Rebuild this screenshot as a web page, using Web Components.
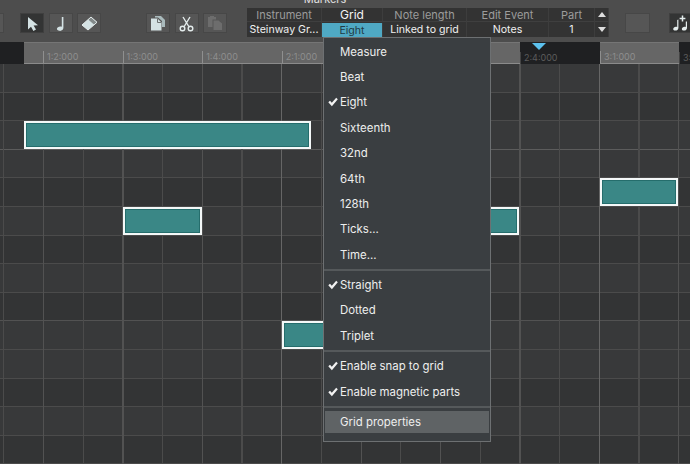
<!DOCTYPE html>
<html>
<head>
<meta charset="utf-8">
<style>
  html, body { margin: 0; background: #333; }
  body { width: 690px; height: 464px; overflow: hidden; font-family: Inter, "Open Sans", sans-serif; }
</style>
</head>
<body>
<rg-app></rg-app>
<script>
const ICONS = {
  arrow: `<path d="M7 3 L7 15.5 L10 12.8 L12.4 17 L15 15.6 L12.6 11.6 L17 11.2 Z" fill="#d4e2e4"/>`,
  note: `<path d="M13.4 3 V13.8 C13.4 16 11.4 17.2 9.2 16.8 C7 16.4 6.2 14.6 7.6 13.4 C9 12.3 10.6 12.2 11.8 12.7 V3 Z" fill="#d4e2e4"/>`,
  eraser: `<path d="M4 11 L13 3 L19 8.3 L10 16 Z" fill="#d4e2e4"/><path d="M10.2 5.5 L13 3 L19 8.3 L16.2 10.8 Z" fill="#838a8a"/><path d="M4 11 L13 3 L19 8.3 L10 16 Z" fill="none" stroke="#e6eded" stroke-width="1" stroke-linejoin="round"/>`,
  copy: `<path d="M8 2 H14 L18 6 V13 H15 V7 L11 3.5 H8 Z" fill="#a9babc"/><path d="M4 4.5 H10.5 L14.5 8.5 V16.5 H4 Z" fill="#d4e2e4"/><path d="M10.5 4.5 V8.5 H14.5" fill="none" stroke="#6d7272"/>`,
  cut: `<path d="M7 3 L12.8 12.5 M14 3 L8.2 12.5" stroke="#e4ecec" stroke-width="1.4" fill="none"/><circle cx="6.5" cy="14.5" r="2.3" fill="none" stroke="#e4ecec" stroke-width="1.4"/><circle cx="14.5" cy="14.5" r="2.3" fill="none" stroke="#e4ecec" stroke-width="1.4"/>`,
  paste: `<path d="M4 3 H6 V2 H10 V3 H12 V5.5 H8.5 V13 H4 Z" fill="#6d6d6d"/><path d="M9.5 6.5 H14.5 L18 9.5 V16 H9.5 Z" fill="#6d6d6d"/>`,
  tuplet: `<path d="M7.2 6 L8.4 5.6 V14 C8.4 16 6 17 4.4 16.4 C2.8 15.8 3 14.2 4 13.4 C5 12.6 6.2 12.6 7.2 13 Z" fill="#e4ecec"/><path d="M15.8 7.5 H17 V14 C17 16 14.6 17 13 16.4 C11.4 15.8 11.6 14.2 12.6 13.4 C13.6 12.6 14.8 12.6 15.8 13 Z" fill="#e4ecec"/><path d="M9.6 4.5 H15.4 M12.5 1.6 V7.4" stroke="#e4ecec" stroke-width="1.5"/>`
};

customElements.define('rg-button', class extends HTMLElement {
  constructor() {
    super();
    const icon = ICONS[this.getAttribute('icon')] || '';
    this.attachShadow({mode: 'open'}).innerHTML = `
      <style>
        :host { display: block; width: 24px; height: 20px; box-sizing: border-box; background: #565656; border: 1px solid #474747; flex: none; }
        :host([active]) { background: #333434; border-color: #3f3f3f; }
        svg { display: block; width: 22px; height: 18px; }
      </style>
      <svg viewBox="0 0 22 18">${icon}</svg>`;
  }
});

customElements.define('rg-cell', class extends HTMLElement {
  constructor() {
    super();
    this.attachShadow({mode: 'open'}).innerHTML = `
      <style>
        :host { display: flex; align-items: center; justify-content: center; overflow: hidden; white-space: nowrap;
                font-size: 10.6px; color: #f0f0f0; border-right: 1px solid #3d3d3d; box-sizing: border-box; }
        :host([head]) { color: #9c9c9c; border-bottom: 1px solid #3f3f3f; font-size: 11px; }
        :host([on]) { color: #f4f4f4; font-size: 12px; }
        :host([sel]) { background: #4fa9c4; color: #1f3a44; margin-top: 1px; }
      </style>
      <slot></slot>`;
  }
});

customElements.define('rg-table', class extends HTMLElement {
  constructor() {
    super();
    this.attachShadow({mode: 'open'}).innerHTML = `
      <style>
        :host { display: grid; grid-template-columns: 75px 61px 84px 82px 46px 14px; grid-template-rows: 14px 15px; width: 362px; background: #333; }
      </style>
      <slot></slot>`;
  }
});

customElements.define('rg-toolbar', class extends HTMLElement {
  constructor() {
    super();
    this.attachShadow({mode: 'open'}).innerHTML = `
      <style>
        :host { display: block; height: 42px; background: #4d4d4d; overflow: hidden; position: relative; }
        .title { height: 3px; width: 650px; display: flex; justify-content: center; align-items: flex-end; overflow: hidden;
                 font-size: 11px; line-height: 8px; color: #e0e0e0; }
        .row { display: flex; align-items: flex-start; }
        .btns { display: flex; gap: 4.5px; padding-top: 10px; }
        .tbl { padding-top: 5px; }
      </style>
      <div class="title">Markers</div>
      <div class="row">
        <div class="btns" style="margin-left:-20px"><rg-button></rg-button></div>
        <div class="btns" style="margin-left:16px"><rg-button icon="arrow" active></rg-button><rg-button icon="note"></rg-button><rg-button icon="eraser"></rg-button></div>
        <div class="btns" style="margin-left:45px"><rg-button icon="copy"></rg-button><rg-button icon="cut"></rg-button><rg-button icon="paste"></rg-button></div>
        <div class="tbl" style="margin-left:20px"><slot></slot></div>
        <div class="btns" style="margin-left:16px"><rg-button style="width:25px"></rg-button></div>
        <div class="btns" style="margin-left:19px"><rg-button icon="tuplet" active></rg-button></div>
      </div>`;
  }
});

customElements.define('rg-tick', class extends HTMLElement {
  constructor() {
    super();
    this.attachShadow({mode: 'open'}).innerHTML = `
      <style>
        :host { display: flex; align-items: flex-end; flex: none; width: 79.6px; height: 100%; box-sizing: border-box; overflow: hidden; white-space: nowrap; }
        .t { border-left: 1px solid #8f8f8f; padding: 0 0 1px 3px; font-size: 9px; line-height: 11px; min-height: 11px; color: #8e8e8e; }
        :host([dim]) .t { border-left-color: #444; color: #5c5c5c; }
      </style>
      <div class="t"><slot></slot></div>`;
  }
});

customElements.define('rg-ruler', class extends HTMLElement {
  constructor() {
    super();
    this.attachShadow({mode: 'open'}).innerHTML = `
      <style>
        :host { display: flex; height: 22px; background: #1f2022; position: relative; }
        .seg { display: flex; height: 100%; box-sizing: border-box; flex: none; overflow: hidden; }
        .on { background: #666; border-top: 1px solid #757575; border-bottom: 1px solid #8b8b8b; }
        .tri { position: absolute; left: 532px; top: 1px; width: 0; height: 0; border: 7.5px solid transparent; border-top: 7px solid #5cc1ee; border-bottom: 0; }
      </style>
      <div class="seg" style="width:24px"></div>
      <div class="seg on" style="width:496px;padding-left:19px">
        <rg-tick>1:2:000</rg-tick><rg-tick>1:3:000</rg-tick><rg-tick>1:4:000</rg-tick><rg-tick>2:1:000</rg-tick>
      </div>
      <div class="seg" style="width:80px"><rg-tick dim>2:4:000</rg-tick></div>
      <div class="seg on" style="width:79px"><rg-tick>3:1:000</rg-tick></div>
      <div class="seg" style="flex:1"><rg-tick dim>3:2:000</rg-tick></div>
      <div class="tri"></div>`;
  }
});

customElements.define('rg-note', class extends HTMLElement {
  constructor() {
    super();
    this.attachShadow({mode: 'open'}).innerHTML = `
      <style>
        :host { position: absolute; box-sizing: border-box; background: #3a8786; border: 2px solid #f4f8f8; box-shadow: inset 0 0 0 1px #256d6c; }
      </style>`;
  }
});

customElements.define('rg-roll', class extends HTMLElement {
  constructor() {
    super();
    // rows from top of the roll (y=64), each 28.6 high; 1 = darker row
    const dark = [0,1,0,0,1,0,1,0,1,0,0,1,0,1];
    const strong = {2: '#5c5c5c', 8: '#525252'};
    const rows = dark.map((d, i) =>
      `<div class="r" style="background:${d ? '#333435' : '#38393a'};border-bottom-color:${strong[i] || '#4b4b4b'}"></div>`).join('');
    this.attachShadow({mode: 'open'}).innerHTML = `
      <style>
        :host { display: block; position: relative; height: 400px; overflow: hidden; }
        .rows { display: grid; grid-auto-rows: 28.6px; }
        .r { border-bottom: 1.5px solid; box-sizing: border-box; }
        .v { position: absolute; inset: 0; background-image:
              repeating-linear-gradient(90deg, transparent 0 281.2px, #666 281.2px 282.4px, transparent 282.4px 317.6px),
              repeating-linear-gradient(90deg, transparent 0 43px, #525252 43px 44.2px, transparent 44.2px 79.4px),
              repeating-linear-gradient(90deg, transparent 0 3.3px, #4b4b4b 3.3px 4.4px, transparent 4.4px 39.7px); }
      </style>
      <div class="rows">${rows}</div>
      <div class="v"></div>
      <slot></slot>`;
  }
});

customElements.define('rg-item', class extends HTMLElement {
  constructor() {
    super();
    this.attachShadow({mode: 'open'}).innerHTML = `
      <style>
        :host { display: flex; align-items: center; flex: none; height: 22px; margin: 1.7px 1px; padding-left: 15px; position: relative;
                font-size: 11.4px; color: #eee; white-space: nowrap; }
        :host([hl]) { background: #5f6365; }
        svg { position: absolute; left: 3px; top: 6px; width: 10px; height: 10px; display: none; }
        :host([checked]) svg { display: block; }
      </style>
      <svg viewBox="0 0 10 10"><path d="M0.3 5.3 L2 3.8 L3.8 5.8 L8.2 0.8 L9.8 2.2 L3.9 9.2 Z" fill="#f2f2f2"/></svg>
      <slot></slot>`;
  }
});

customElements.define('rg-sep', class extends HTMLElement {
  constructor() {
    super();
    this.attachShadow({mode: 'open'}).innerHTML = `
      <style>:host { display: block; flex: none; height: 2px; margin: 1.5px 0; background: #55595b; }</style>`;
  }
});

customElements.define('rg-menu', class extends HTMLElement {
  constructor() {
    super();
    this.attachShadow({mode: 'open'}).innerHTML = `
      <style>
        :host { position: absolute; left: 323px; top: 37px; width: 168px; height: 405px; box-sizing: border-box; display: flex; flex-direction: column;
                background: #3a3e41; border: 1px solid #6d7072; padding-top: 1px; z-index: 2; }
      </style>
      <slot></slot>`;
  }
});

customElements.define('rg-app', class extends HTMLElement {
  constructor() {
    super();
    this.attachShadow({mode: 'open'}).innerHTML = `
      <style>
        :host { display: block; width: 690px; height: 464px; position: relative; overflow: hidden; }
      </style>
      <rg-toolbar>
        <rg-table>
          <rg-cell head>Instrument</rg-cell><rg-cell head on>Grid</rg-cell><rg-cell head>Note length</rg-cell><rg-cell head>Edit Event</rg-cell><rg-cell head>Part</rg-cell>
          <rg-cell head><svg width="8" height="5" viewBox="0 0 8 5"><path d="M0 5 L4 0 L8 5 Z" fill="#ddd"/></svg></rg-cell>
          <rg-cell>Steinway Gr...</rg-cell><rg-cell sel>Eight</rg-cell><rg-cell>Linked to grid</rg-cell><rg-cell>Notes</rg-cell><rg-cell>1</rg-cell>
          <rg-cell><svg width="8" height="5" viewBox="0 0 8 5"><path d="M0 0 L4 5 L8 0 Z" fill="#ddd"/></svg></rg-cell>
        </rg-table>
      </rg-toolbar>
      <rg-ruler></rg-ruler>
      <rg-roll>
        <rg-note style="left:24px;top:57px;width:287px;height:28px"></rg-note>
        <rg-note style="left:123px;top:143px;width:79px;height:28px"></rg-note>
        <rg-note style="left:440px;top:143px;width:79px;height:28px"></rg-note>
        <rg-note style="left:600px;top:114px;width:78px;height:28px"></rg-note>
        <rg-note style="left:282px;top:257px;width:79px;height:28px"></rg-note>
      </rg-roll>
      <rg-menu>
        <rg-item>Measure</rg-item><rg-item>Beat</rg-item><rg-item checked>Eight</rg-item><rg-item>Sixteenth</rg-item>
        <rg-item>32nd</rg-item><rg-item>64th</rg-item><rg-item>128th</rg-item><rg-item>Ticks...</rg-item><rg-item>Time...</rg-item>
        <rg-sep></rg-sep>
        <rg-item checked>Straight</rg-item><rg-item>Dotted</rg-item><rg-item>Triplet</rg-item>
        <rg-sep></rg-sep>
        <rg-item checked>Enable snap to grid</rg-item><rg-item checked>Enable magnetic parts</rg-item>
        <rg-sep></rg-sep>
        <rg-item hl>Grid properties</rg-item>
      </rg-menu>`;
  }
});
</script>
</body>
</html>
